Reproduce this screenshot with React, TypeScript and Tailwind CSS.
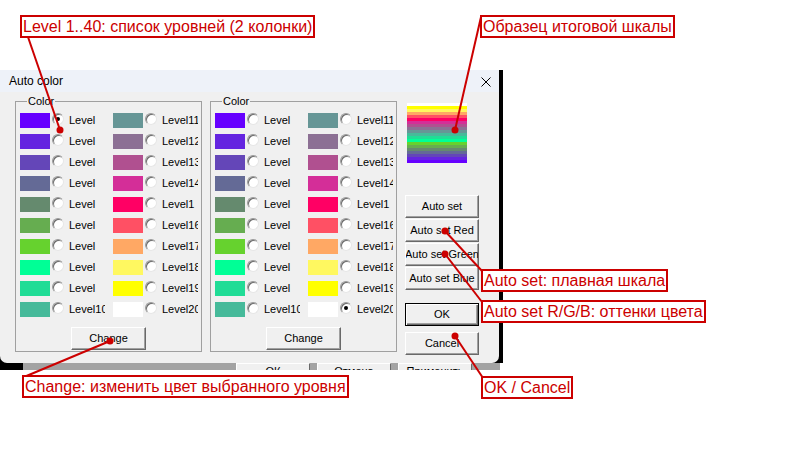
import React from 'react';

const colors = [
  '#6600ff', '#6424e0', '#6446b8', '#646a96', '#658a6e', '#66ad50', '#66d22e', '#00ff96', '#20dc96', '#46ba9a',
  '#669696', '#8c7094', '#b05090', '#d42e98', '#ff0064', '#ff5064', '#ffa864', '#fff860', '#ffff00', '#ffffff',
];

const labels = [
  'Level', 'Level', 'Level', 'Level', 'Level', 'Level', 'Level', 'Level', 'Level', 'Level10',
  'Level11', 'Level12', 'Level13', 'Level14', 'Level1', 'Level16', 'Level17', 'Level18', 'Level19', 'Level20',
];

const Radio = ({ checked }: { checked?: boolean }) => (
  <span className="flex h-[12px] w-[12px] shrink-0 items-center justify-center rounded-full border border-t-[#9a9a9a] border-l-[#9a9a9a] border-r-[#e6e6e6] border-b-[#e6e6e6] bg-white shadow-[inset_1px_1px_0_#6a6a6a]">
    {checked && <span className="h-[4px] w-[4px] rounded-full bg-black" />}
  </span>
);

const WinButton = ({ label, def, className = '' }: { label: string; def?: boolean; className?: string }) => (
  <div
    className={`flex h-[23px] items-center justify-center overflow-hidden whitespace-nowrap bg-[#f0f0f0] text-[11px] text-black ${
      def
        ? 'border border-black shadow-[inset_1px_1px_0_#fff,inset_-1px_-1px_0_#696969,inset_-2px_-2px_0_#a0a0a0]'
        : 'border border-t-white border-l-white border-r-[#696969] border-b-[#696969] shadow-[inset_-1px_-1px_0_#a0a0a0]'
    } ${className}`}
  >
    {label}
  </div>
);

const LevelRow = ({ i, checked }: { i: number; checked: boolean }) => (
  <div className="flex h-[15px] items-start">
    <div className="h-[15px] w-[30px] shrink-0" style={{ backgroundColor: colors[i] }} />
    <div className="ml-[2px]">
      <Radio checked={checked} />
    </div>
    <span className="ml-[5px] mt-[1px] w-[36px] overflow-hidden whitespace-nowrap text-[11px] leading-[13px] text-black">
      {labels[i]}
    </span>
  </div>
);

const ColorGroup = ({ checked }: { checked: number }) => (
  <fieldset className="w-[187px] min-w-0 shrink-0 border border-[#a0a0a0] pb-[1px] pl-[4px]">
    <legend className="ml-[7px] px-[1px] text-[11px] leading-[13px] text-black">Color</legend>
    <div className="flex pt-[5px]">
      <div className="flex w-[93px] flex-col gap-[6px]">
        {Array.from({ length: 10 }, (_, k) => (
          <LevelRow key={k} i={k} checked={checked === k} />
        ))}
      </div>
      <div className="flex w-[85px] flex-col gap-[6px]">
        {Array.from({ length: 10 }, (_, k) => (
          <LevelRow key={k} i={10 + k} checked={checked === 10 + k} />
        ))}
      </div>
    </div>
    <div className="mt-[10px] flex justify-center pr-[4px]">
      <WinButton label="Change" className="w-[75px]" />
    </div>
  </fieldset>
);

const Note = ({ text, className }: { text: string; className: string }) => (
  <div
    className={`absolute whitespace-nowrap border-2 border-[#cc0000] bg-white px-[1px] text-[16px] leading-[19px] text-[#cc0000] ${className}`}
  >
    {text}
  </div>
);

const scale = [...colors].reverse();

export default function App() {
  return (
    <div className="relative h-[460px] w-[803px] overflow-hidden bg-white font-['Liberation_Sans',Arial,sans-serif]">
      <div className="pt-[70px]">
        <div className="w-[503px] bg-black">
          <div className="w-[499px] overflow-hidden rounded-b-[7px] bg-[#f0f0f0]">
            {/* title bar */}
            <div className="flex h-[22px] items-center justify-between bg-[#eef2f9] pl-[9px] pr-[8px]">
              <span className="text-[12px] text-black">Auto color</span>
              <svg width="10" height="10" viewBox="0 0 10 10" className="mt-[1px]">
                <path d="M0.5 0.5L9.5 9.5M9.5 0.5L0.5 9.5" stroke="#000" strokeWidth="1" />
              </svg>
            </div>
            {/* body */}
            <div className="flex h-[271px] items-start pl-[15px] pt-[3px]">
              <ColorGroup checked={0} />
              <div className="ml-[8px]">
                <ColorGroup checked={19} />
              </div>
              <div className="ml-[8px] flex w-[74px] shrink-0 flex-col">
                <div className="ml-[2px] mt-[8px] flex h-[60px] w-[60px] flex-col">
                  {scale.map((c, k) => (
                    <div key={k} className="h-[3px] w-full" style={{ backgroundColor: c }} />
                  ))}
                </div>
                <WinButton label="Auto set" className="mt-[32px]" />
                <WinButton label="Auto set Red" className="mt-[1px]" />
                <WinButton label="Auto set Green" className="mt-[1px]" />
                <WinButton label="Auto set Blue" className="mt-[1px]" />
                <WinButton label="OK" def className="mt-[13px]" />
                <WinButton label="Cancel" className="mt-[6px]" />
              </div>
            </div>
          </div>
        </div>
        {/* parent window peeking out below */}
        <div className="flex h-[7px] w-[500px] overflow-hidden">
          <div className="w-[23px] bg-black" />
          <div className="flex flex-1 bg-[#a3a3a3] pl-[213px]">
            {['ОК', 'Отмена', 'Применить'].map((t, k) => (
              <div
                key={t}
                className={`flex h-[23px] w-[74px] justify-center border border-t-white border-l-white border-r-[#696969] bg-[#f0f0f0] pt-[1px] text-[11px] leading-[13px] text-black ${
                  k > 0 ? 'ml-[7px]' : ''
                }`}
              >
                {t}
              </div>
            ))}
          </div>
        </div>
      </div>

      {/* callout lines */}
      <svg className="absolute left-0 top-0" width="803" height="460">
        <g stroke="#cc0000" strokeWidth="2" fill="none">
          <line x1="28" y1="37" x2="60" y2="130" />
          <line x1="481" y1="17" x2="455" y2="130" />
          <line x1="445" y1="231" x2="482" y2="271" />
          <line x1="445" y1="254" x2="482" y2="302" />
          <line x1="455" y1="336" x2="483" y2="378" />
          <line x1="110" y1="341" x2="24" y2="377" />
        </g>
        <g fill="#cc0000">
          <circle cx="60" cy="130" r="3.5" />
          <circle cx="455" cy="130" r="3.5" />
          <circle cx="445" cy="231" r="3.5" />
          <circle cx="445" cy="254" r="3.5" />
          <circle cx="455" cy="336" r="3.5" />
          <circle cx="110" cy="341" r="3.5" />
        </g>
      </svg>

      <Note text="Level 1..40: список уровней (2 колонки)" className="left-[20px] top-[15px]" />
      <Note text="Образец итоговой шкалы" className="left-[480px] top-[15px]" />
      <Note text="Auto set: плавная шкала" className="left-[481px] top-[269px]" />
      <Note text="Auto set R/G/B: оттенки цвета" className="left-[481px] top-[300px]" />
      <Note text="OK / Cancel" className="left-[481px] top-[376px]" />
      <Note text="Change: изменить цвет выбранного уровня" className="left-[22px] top-[375px]" />
    </div>
  );
}
